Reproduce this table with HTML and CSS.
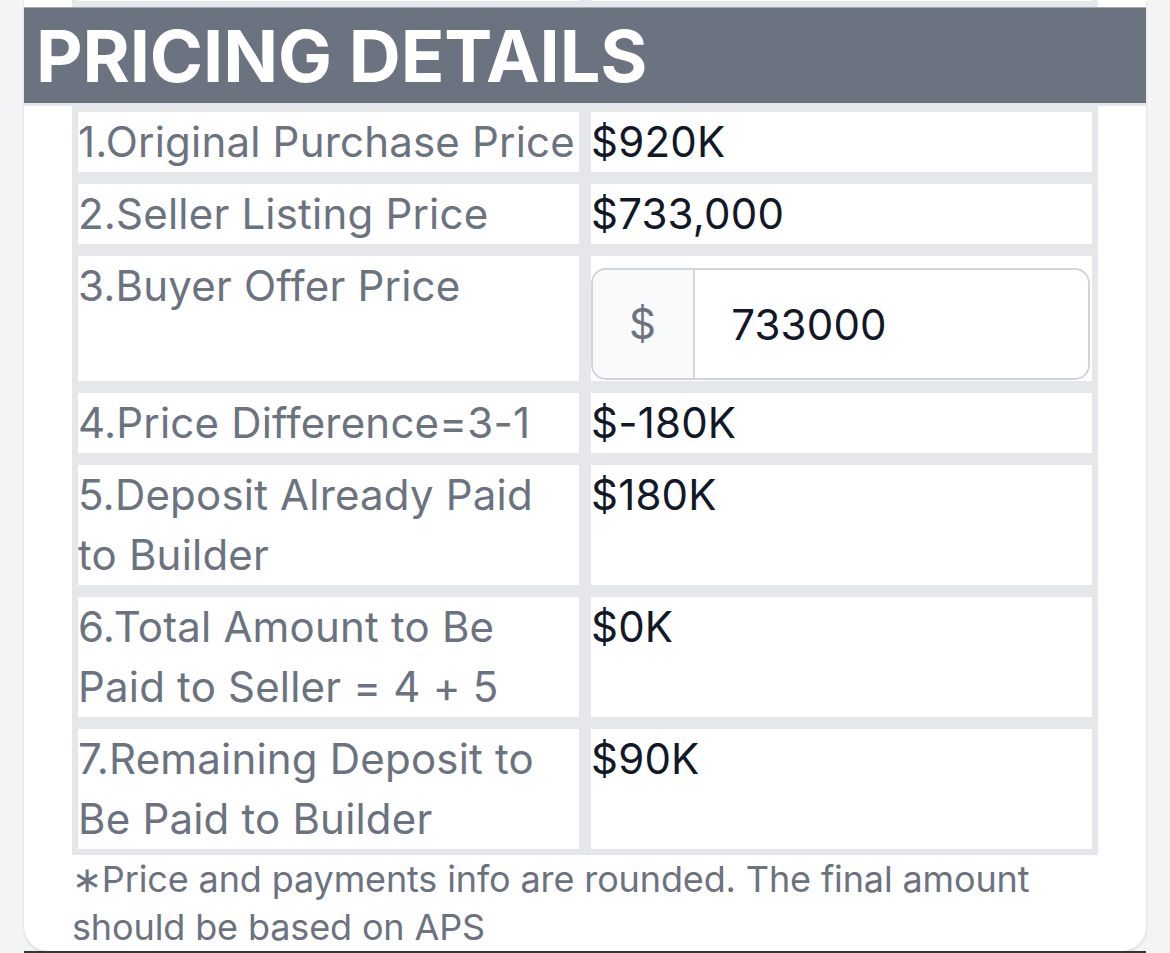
FILE: index.html
```html
<!DOCTYPE html>
<html lang="en">
<head>
<meta charset="utf-8">
<title>Pricing Details</title>
<link rel="stylesheet" href="styles.css">
</head>
<body>
<div class="card">
  <div class="prev-row">
    <div class="prev-cell"></div>
    <div class="prev-cell"></div>
  </div>
  <h2 class="section-title">PRICING DETAILS</h2>
  <table class="price-table">
    <tbody>
      <tr>
        <td class="label">1.Original Purchase Price</td>
        <td class="value">$920K</td>
      </tr>
      <tr>
        <td class="label">2.Seller Listing Price</td>
        <td class="value">$733,000</td>
      </tr>
      <tr>
        <td class="label">3.Buyer Offer Price</td>
        <td class="value">
          <div class="input-group">
            <span class="addon">$</span>
            <input class="offer-input" type="text" value="733000">
          </div>
        </td>
      </tr>
      <tr>
        <td class="label">4.Price Difference=3-1</td>
        <td class="value">$-180K</td>
      </tr>
      <tr>
        <td class="label">5.Deposit Already Paid to Builder</td>
        <td class="value">$180K</td>
      </tr>
      <tr>
        <td class="label">6.Total Amount to Be Paid to Seller = 4 + 5</td>
        <td class="value">$0K</td>
      </tr>
      <tr>
        <td class="label">7.Remaining Deposit to Be Paid to Builder</td>
        <td class="value">$90K</td>
      </tr>
    </tbody>
  </table>
  <p class="footnote">∗Price and payments info are rounded. The final amount should be based on APS</p>
</div>
<div class="next-section"></div>
</body>
</html>
```
FILE: styles.css
```css
* {
  box-sizing: border-box;
}

html, body {
  margin: 0;
  padding: 0;
}

body {
  background: #f3f4f6;
  font-family: Inter, "Noto Sans", "Liberation Sans", sans-serif;
}

.card {
  margin: 0 24px;
  background: #ffffff;
  border-radius: 0 0 24px 24px;
  box-shadow: 0 1px 3px rgba(0, 0, 0, 0.10), 0 1px 2px rgba(0, 0, 0, 0.06);
  height: 951px;
  overflow: hidden;
}

.prev-row {
  display: flex;
  margin: 0 48px;
  height: 7px;
}

.prev-cell {
  flex: 1 1 0;
  border: 6px solid #e5e7eb;
  border-top: 0;
  background: #ffffff;
}

.section-title {
  margin: 0;
  background: #6b7280;
  color: #ffffff;
  border-top: 1px solid #a3a7ae;
  border-bottom: 3px solid #e5e7eb;
  font-size: 72px;
  line-height: 95px;
  font-weight: 700;
  padding: 0 12px;
  letter-spacing: -0.1px;
}

.price-table {
  margin: 0 48px;
  width: calc(100% - 96px);
  border-collapse: separate;
  border-spacing: 0;
  table-layout: fixed;
}

.price-table td {
  border: 6px solid #e5e7eb;
  background: #ffffff;
  padding: 0;
  vertical-align: top;
  font-size: 42px;
  line-height: 60px;
  letter-spacing: 0.2px;
}

.price-table td.label {
  width: 50%;
  color: #6b7280;
}

.price-table td.value {
  color: #111827;
}

.input-group {
  display: flex;
  margin: 12px 2px 1px 0;
  height: 112px;
  border: 2px solid #d1d5db;
  border-radius: 15px;
  overflow: hidden;
  background: #ffffff;
}

.addon {
  display: flex;
  align-items: center;
  padding: 0 37px 0 36px;
  background: #f9fafb;
  border-right: 2px solid #d1d5db;
  color: #6b7280;
  font-size: 42px;
}

.offer-input {
  flex: 1 1 auto;
  min-width: 0;
  border: 0;
  outline: none;
  background: transparent;
  padding: 0 36px;
  font-family: inherit;
  font-size: 42px;
  letter-spacing: 0.2px;
  color: #111827;
}

.footnote {
  margin: 0 48px;
  color: #6b7280;
  font-size: 36px;
  line-height: 48px;
  letter-spacing: -0.13px;
}

.next-section {
  margin: 0 24px;
  border-top: 2px solid #37352f;
}
```
